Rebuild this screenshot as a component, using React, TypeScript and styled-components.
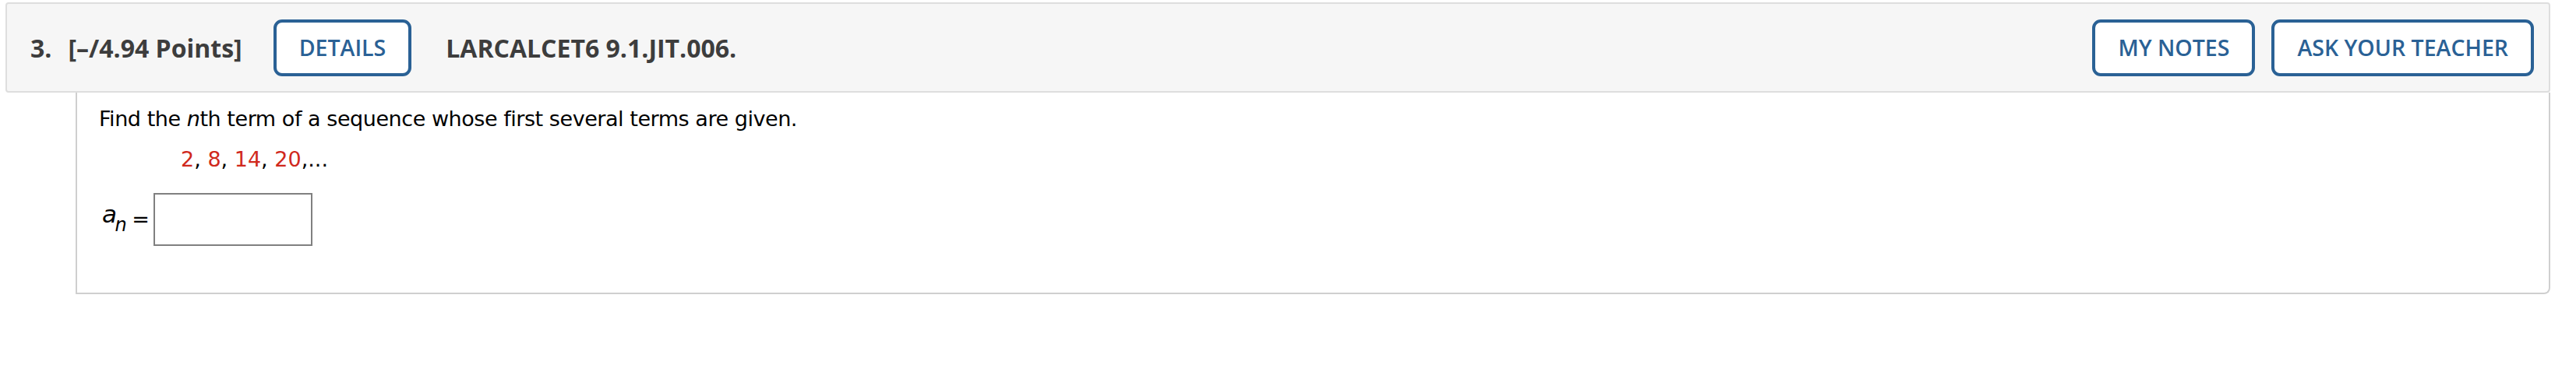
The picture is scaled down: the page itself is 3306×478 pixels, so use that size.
import styled, { createGlobalStyle } from "styled-components";

const GlobalStyle = createGlobalStyle`
  body {
    margin: 0;
    background: #fff;
  }
`;

const Page = styled.div`
  padding: 3px 33px 0 7px;
`;

const Header = styled.div`
  display: flex;
  align-items: center;
  height: 112px;
  padding: 0 19px 0 30px;
  background: #f6f6f6;
  border: 2px solid #dedede;
  border-radius: 4px;
  font-family: "Open Sans", "Liberation Sans", sans-serif;
  color: #3d3d3d;
`;

const Number = styled.span`
  font-size: 32px;
  font-weight: 700;
  margin-right: 21px;
`;

const Points = styled.span`
  font-size: 32px;
  font-weight: 700;
  margin-right: 40px;
`;

const Title = styled.span`
  font-size: 32px;
  font-weight: 700;
  margin-left: 44px;
`;

const Actions = styled.div`
  display: flex;
  gap: 21px;
  margin-left: auto;
`;

const OutlineButton = styled.button`
  height: 73px;
  padding: 0 29px;
  background: #fff;
  border: 4px solid #2a6195;
  border-radius: 11px;
  color: #2a6195;
  font-family: "Open Sans", "Liberation Sans", sans-serif;
  font-size: 28.5px;
  font-weight: 600;
  cursor: pointer;
`;

const Body = styled.div`
  margin-left: 90px;
  padding: 16px 28px 60px;
  border: 2px solid #cfcfcf;
  border-top: none;
  border-radius: 0 0 8px 0;
  font-family: Verdana, "DejaVu Sans", sans-serif;
  font-size: 27px;
  letter-spacing: -0.45px;
  line-height: 36px;
  color: #000;
`;

const Prompt = styled.p`
  margin: 0;
`;

const Sequence = styled.p`
  margin: 16px 0 0 105px;
  letter-spacing: 0;
`;

const Term = styled.span`
  color: #d0291d;
`;

const AnswerRow = styled.div`
  display: flex;
  align-items: center;
  margin-top: 25px;
`;

const Var = styled.span`
  font-style: italic;
  font-size: 31px;
  padding-left: 4px;
`;

const Sub = styled.sub`
  font-size: 24px;
  vertical-align: -11px;
  margin-left: -2px;
`;

const Equals = styled.span`
  margin: 0 5px 0 7px;
`;

const AnswerInput = styled.input`
  width: 200px;
  height: 64px;
  box-sizing: content-box;
  padding: 0;
  border: 2px solid #808080;
  background: #fff;
`;

export default function App() {
  const terms = ["2", "8", "14", "20"];

  return (
    <Page>
      <GlobalStyle />
      <Header>
        <Number>3.</Number>
        <Points>[–/4.94 Points]</Points>
        <OutlineButton>DETAILS</OutlineButton>
        <Title>LARCALCET6 9.1.JIT.006.</Title>
        <Actions>
          <OutlineButton>MY NOTES</OutlineButton>
          <OutlineButton>ASK YOUR TEACHER</OutlineButton>
        </Actions>
      </Header>
      <Body>
        <Prompt>
          Find the <i>n</i>th term of a sequence whose first several terms are given.
        </Prompt>
        <Sequence>
          {terms.map((t, i) => (
            <span key={t}>
              <Term>{t}</Term>,{i < terms.length - 1 ? " " : ""}
            </span>
          ))}
          ...
        </Sequence>
        <AnswerRow>
          <Var>
            a<Sub>n</Sub>
          </Var>
          <Equals>=</Equals>
          <AnswerInput type="text" />
        </AnswerRow>
      </Body>
    </Page>
  );
}
